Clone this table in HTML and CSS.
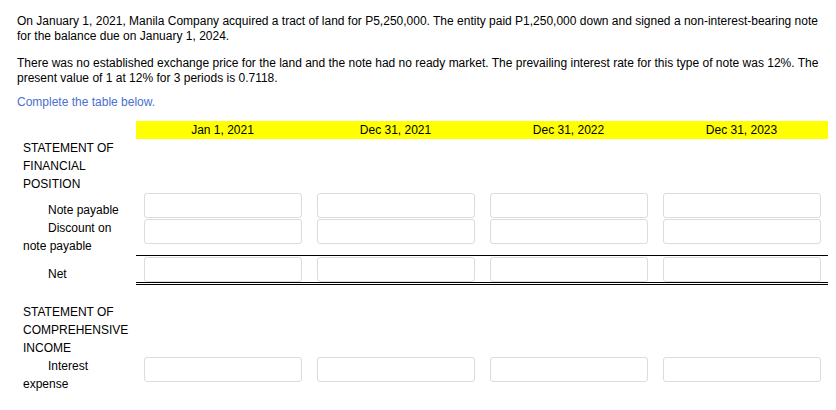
FILE: index.html
```html
<!DOCTYPE html>
<html>
<head>
<meta charset="utf-8">
<link rel="stylesheet" href="styles.css">
</head>
<body>
<div class="page">
  <p class="q">On January 1, 2021, Manila Company acquired a tract of land for P5,250,000. The entity paid P1,250,000 down and signed a non-interest-bearing note for the balance due on January 1, 2024.</p>
  <p class="q q2">There was no established exchange price for the land and the note had no ready market. The prevailing interest rate for this type of note was 12%. The present value of 1 at 12% for 3 periods is 0.7118.</p>
  <p class="link">Complete the table below.</p>

  <div class="sheet">
    <div class="row head">
      <div class="lbl"></div>
      <div class="h">Jan 1, 2021</div>
      <div class="h">Dec 31, 2021</div>
      <div class="h">Dec 31, 2022</div>
      <div class="h">Dec 31, 2023</div>
    </div>
    <div class="row sec">
      <div class="lbl">STATEMENT OF FINANCIAL POSITION</div>
    </div>
    <div class="row item short">
      <div class="lbl ind pad8">Note payable</div>
      <div class="cell"><input class="box" type="text"></div>
      <div class="cell"><input class="box" type="text"></div>
      <div class="cell"><input class="box" type="text"></div>
      <div class="cell"><input class="box" type="text"></div>
    </div>
    <div class="row item ruled">
      <div class="lbl ind">Discount on note payable</div>
      <div class="cell single"><input class="box" type="text"></div>
      <div class="cell single"><input class="box" type="text"></div>
      <div class="cell single"><input class="box" type="text"></div>
      <div class="cell single"><input class="box" type="text"></div>
    </div>
    <div class="row item total">
      <div class="lbl ind pad9">Net</div>
      <div class="cell double"><input class="box b1" type="text"></div>
      <div class="cell double"><input class="box b1" type="text"></div>
      <div class="cell double"><input class="box b1" type="text"></div>
      <div class="cell double"><input class="box b1" type="text"></div>
    </div>
    <div class="row spacer"></div>
    <div class="row sec">
      <div class="lbl">STATEMENT OF COMPREHENSIVE INCOME</div>
    </div>
    <div class="row item">
      <div class="lbl ind">Interest expense</div>
      <div class="cell"><input class="box" type="text"></div>
      <div class="cell"><input class="box" type="text"></div>
      <div class="cell"><input class="box" type="text"></div>
      <div class="cell"><input class="box" type="text"></div>
    </div>
  </div>
</div>
</body>
</html>
```
FILE: styles.css
```css
html, body {
  margin: 0;
  padding: 0;
  background: #fff;
}

.page {
  width: 811px;
  padding: 14px 0 0 17px;
  font-family: "Liberation Sans", Arial, sans-serif;
  font-size: 12px;
  color: #000;
}

.q {
  margin: 0 0 12px;
  line-height: 15px;
}

.q2 {
  margin-bottom: 9px;
}

.link {
  margin: 0 0 11px;
  line-height: 15px;
  color: #4a6fd0;
}

.sheet {
  display: flex;
  flex-direction: column;
}

.row {
  display: grid;
  grid-template-columns: 119px repeat(4, 173px);
  line-height: 18px;
}

.lbl {
  padding-left: 6px;
}

.ind {
  text-indent: 25px;
}

.pad8 {
  padding-top: 8px;
}

.pad9 {
  padding-top: 9px;
}

.head {
  height: 18px;
}

.h {
  background: #ffff00;
  text-align: center;
  line-height: 18px;
}

.sec {
  height: 54px;
}

.short {
  height: 26px;
}

.ruled {
  height: 37px;
}

.total {
  height: 29px;
}

.spacer {
  height: 18px;
}

.cell {
  padding-left: 8px;
}

.single {
  border-bottom: 1px solid #000;
}

.double {
  border-bottom: 3px double #000;
}

.box {
  display: block;
  box-sizing: border-box;
  width: 158px;
  height: 25px;
  margin: 0;
  padding: 0 4px;
  border: 1px solid #dcdcdc;
  border-radius: 3px;
  background: #fff;
  font: 12px "Liberation Sans", Arial, sans-serif;
}

.b1 {
  margin-top: 1px;
}
```
